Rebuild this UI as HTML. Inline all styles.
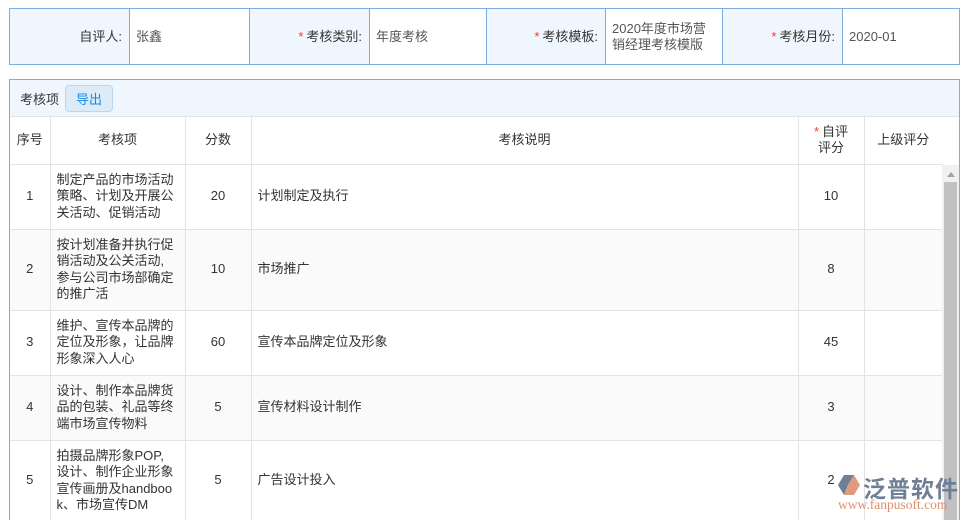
<!DOCTYPE html>
<html><head><meta charset="utf-8"><style>
*{margin:0;padding:0;box-sizing:border-box}
html,body{width:966px;height:520px;overflow:hidden}
body{background:#fff;font-family:"Liberation Sans","Noto Sans CJK SC",sans-serif;font-size:13px;color:#333;position:relative}
.form{position:absolute;left:9px;top:8px;width:951px;height:57px;border:1px solid #7eaede;display:flex}
.form div{height:100%;display:flex;align-items:center;border-right:1px solid #7eaede;line-height:16px}
.form .l{background:#f0f6fd;justify-content:flex-end;padding-right:7px}
.form .v{padding-left:6px;color:#555}
.req{color:#f33;margin-right:3px}
.box{position:absolute;left:9px;top:79px;width:951px;height:445px;border:1px solid #7eaede;border-bottom:none;overflow:hidden}
.tb{height:37px;background:#f0f6fd;border-bottom:1px solid #e3e3e3;display:flex;align-items:center;padding-left:10px}
.btn{margin-left:6px;width:48px;height:27px;border:1px solid #bcd6ef;background:#ddebf9;border-radius:4px;color:#1a8ae0;display:flex;align-items:center;justify-content:center}
table{border-collapse:collapse;table-layout:fixed;position:absolute;left:0;top:37px}
td{border-right:1px solid #e3e3e3;border-bottom:1px solid #e3e3e3;text-align:center;line-height:16.5px;vertical-align:middle}
td.t{text-align:left;padding-left:6px}
tr.s td{background:#fafafa}
.sb{position:absolute;left:932px;top:85px;width:17px;height:380px;background:#f1f1f1}
.sb .a{position:absolute;left:5px;top:7px;border-left:4px solid transparent;border-right:4px solid transparent;border-bottom:5px solid #a3a3a3}
.sb .th{position:absolute;left:2px;top:17px;width:13px;height:360px;background:#c1c1c1}
.logo{position:absolute;left:836px;top:473px}
</style></head><body>
<div class="form">
<div class="l" style="width:120px">自评人:</div>
<div class="v" style="width:120px">张鑫</div>
<div class="l" style="width:120px"><span class="req">*</span>考核类别:</div>
<div class="v" style="width:117px">年度考核</div>
<div class="l" style="width:119px"><span class="req">*</span>考核模板:</div>
<div class="v" style="width:117px">2020年度市场营<br>销经理考核模版</div>
<div class="l" style="width:120px"><span class="req">*</span>考核月份:</div>
<div class="v" style="width:116px;border-right:none">2020-01</div>
</div>
<div class="box">
<div class="tb">考核项<div class="btn">导出</div></div>
<table>
<colgroup><col style="width:40px"><col style="width:135px"><col style="width:66px"><col style="width:547px"><col style="width:66px"><col style="width:78px"></colgroup>
<tr style="height:47px"><td>序号</td><td>考核项</td><td>分数</td><td>考核说明</td><td><span class="req">*</span>自评<br>评分</td><td style="border-right:none">上级评分</td></tr>
<tr style="height:65px"><td>1</td><td class="t">制定产品的市场活动<br>策略、计划及开展公<br>关活动、促销活动</td><td>20</td><td class="t">计划制定及执行</td><td>10</td><td></td></tr>
<tr class="s" style="height:81px"><td>2</td><td class="t">按计划准备并执行促<br>销活动及公关活动,<br>参与公司市场部确定<br>的推广活</td><td>10</td><td class="t">市场推广</td><td>8</td><td></td></tr>
<tr style="height:65px"><td>3</td><td class="t">维护、宣传本品牌的<br>定位及形象，让品牌<br>形象深入人心</td><td>60</td><td class="t">宣传本品牌定位及形象</td><td>45</td><td></td></tr>
<tr class="s" style="height:65px"><td>4</td><td class="t">设计、制作本品牌货<br>品的包装、礼品等终<br>端市场宣传物料</td><td>5</td><td class="t">宣传材料设计制作</td><td>3</td><td></td></tr>
<tr style="height:81px"><td>5</td><td class="t">拍摄品牌形象POP,<br>设计、制作企业形象<br>宣传画册及handboo<br>k、市场宣传DM</td><td>5</td><td class="t">广告设计投入</td><td>2</td><td></td></tr>
</table>
<div class="sb"><div class="a"></div><div class="th"></div></div>
</div>
<div class="logo">
<svg width="26" height="24" style="position:absolute;left:0;top:0"><path d="M2 12 L8 2 L18 2 L12 12 L8 22 Z" fill="#6f7f96"/><path d="M12 12 L18 2 L24 12 L18 22 L8 22 Z" fill="#e29a7c"/></svg>
<span style="position:absolute;left:27px;top:-3px;font-size:23px;color:#6f7f96;white-space:nowrap;font-weight:bold;letter-spacing:1px">泛普软件</span>
<span style="position:absolute;left:2px;top:24px;font-size:13.5px;color:#e0906f;font-family:'Liberation Serif',serif;white-space:nowrap">www.fanpusoft.com</span>
</div>
</body></html>
